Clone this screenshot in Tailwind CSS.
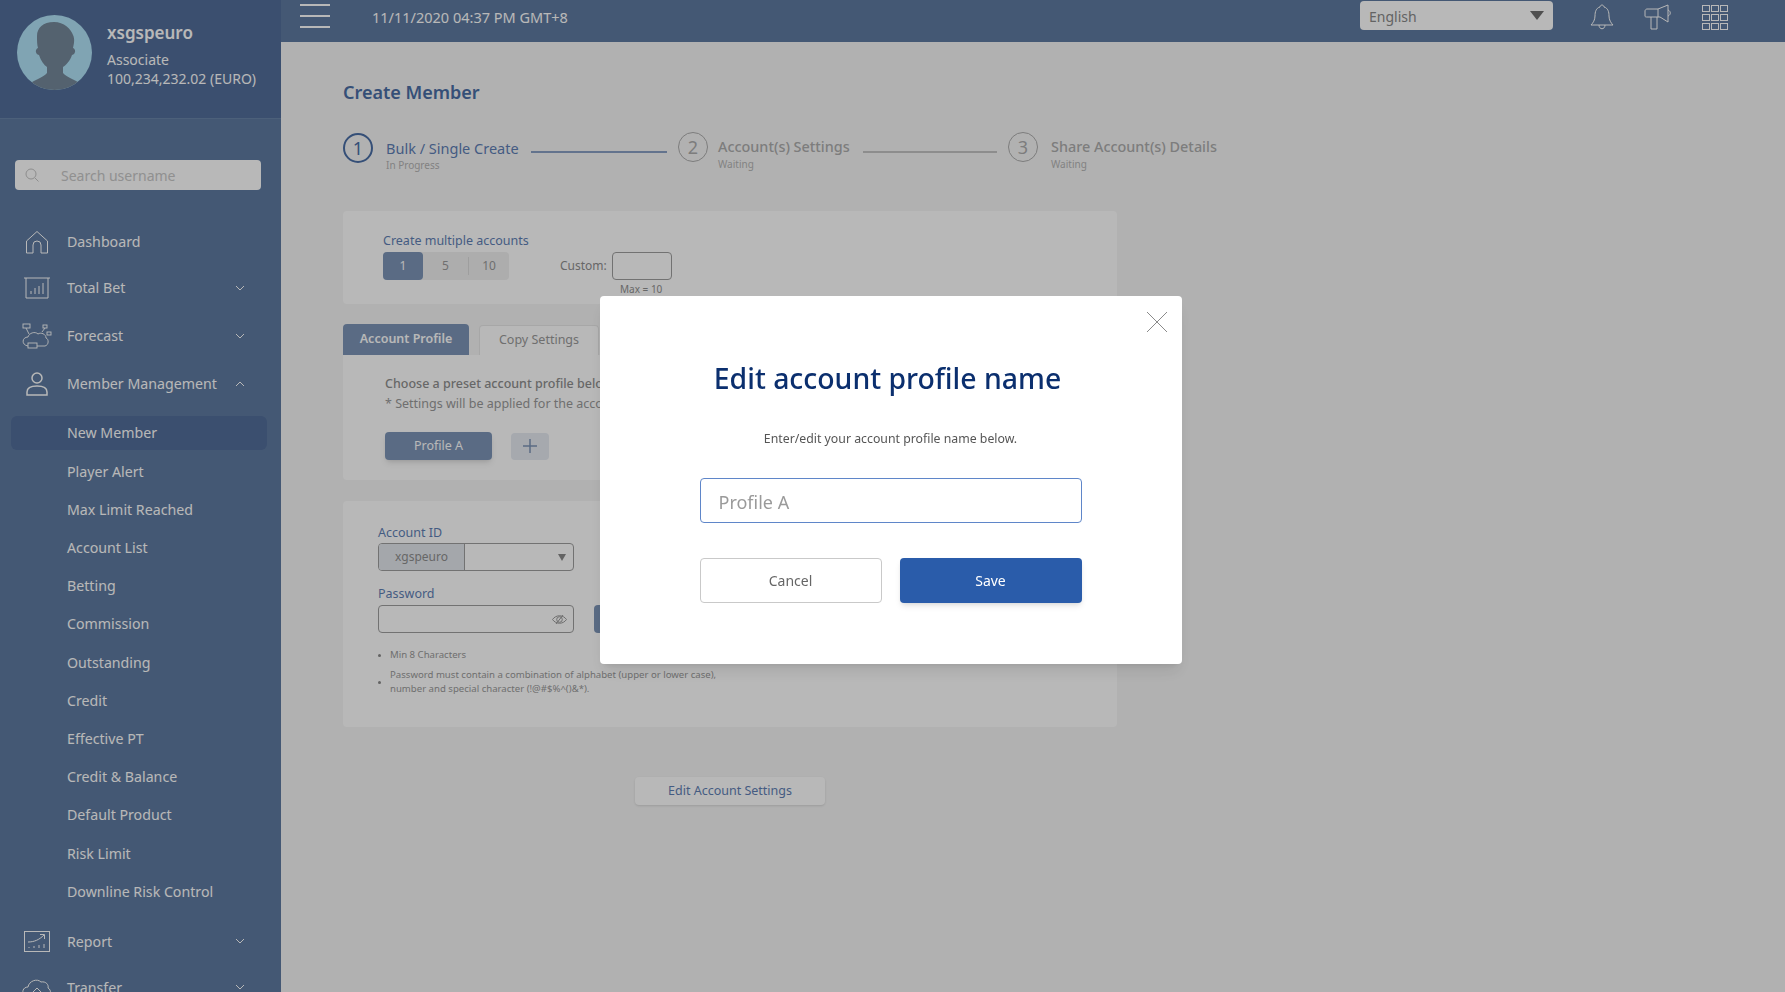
<!DOCTYPE html>
<html lang="en">

<head>
    <meta charset="UTF-8">
    <meta name="viewport" content="width=device-width, initial-scale=1.0">
    <title>Create Member</title>
    <script src="https://cdn.jsdelivr.net/npm/@tailwindcss/browser@4"></script>
</head>

<body class="h-[992px] overflow-hidden bg-[#f6f6f6] font-['Noto_Sans',sans-serif]">
    <div class="flex h-[992px]">
        <!-- sidebar -->
        <aside class="w-[281px] h-[992px] shrink-0 overflow-hidden bg-[#5f7ba1] text-white">
            <div class="h-[119px] flex items-start pl-[17px] pt-[15px] gap-[15px] bg-[#526e9a] border-b border-[#6a85aa]">
                <svg class="w-[75px] h-[75px]" viewBox="0 0 75 75">
                    <clipPath id="avatar"><circle cx="37.5" cy="37.5" r="37.5" /></clipPath>
                    <g clip-path="url(#avatar)">
                        <rect width="75" height="75" fill="#b2e4f8" />
                        <path d="M37 7c-11 0-17 6-17 14 0 5 0 9 1 12-3 1-3 6 1 7 2 6 5 10 8 12v6c-4 5-14 7-22 14v3h60v-3c-8-7-18-9-22-14v-6c3-2 7-6 9-12 4-1 4-6 1-7 1-4 2-9 0-13-2-6-9-13-19-13z" fill="#75889a" />
                    </g>
                </svg>
                <div class="pt-[7px]">
                    <p class="text-[17px] leading-[22px] font-semibold">xsgspeuro</p>
                    <p class="text-[14px] leading-[19px] mt-[6px]">Associate</p>
                    <p class="text-[14px] leading-[19px]">100,234,232.02 (EURO)</p>
                </div>
            </div>

            <div class="mt-[41px] mx-[15px] w-[246px] h-[30px] rounded-[4px] bg-white flex items-center pl-[10px] gap-[22px]">
                <svg class="w-[14px] h-[14px] text-[#c4c4c4]" viewBox="0 0 14 14" fill="none" stroke="currentColor"><circle cx="6" cy="6" r="5" /><path d="M10 10l3.500 3.500" /></svg>
                <span class="text-[14px] text-[#c8c8c8]">Search username</span>
            </div>

            <nav class="mt-[29px] text-[14.2px]">
                <div class="h-[46px] flex items-center">
                    <svg class="w-[24px] h-[24px] ml-[25px] mr-[18px]" viewBox="0 0 24 24" fill="none" stroke="currentColor"><path d="M1.500 11L12 1.500 22.500 11v12H16v-8a4 4 0 0 0-8 0v8H1.500z" /></svg>
                    <span>Dashboard</span>
                </div>
                <div class="h-[46px] flex items-center">
                    <svg class="w-[26px] h-[22px] ml-[24px] mr-[17px]" viewBox="0 0 26 22" fill="none" stroke="currentColor"><path d="M0 1h26M2 1v20h22V1" /><path d="M7 17v-3M11 17v-6M15 17V9M19 17V6" /></svg>
                    <span>Total Bet</span>
                    <svg class="w-[10px] h-[6px] ml-auto mr-[36px]" viewBox="0 0 10 6" fill="none" stroke="currentColor"><path d="M1 1l4 4 4-4" /></svg>
                </div>
                <div class="h-[50px] flex items-center">
                    <svg class="w-[30px] h-[26px] ml-[22px] mr-[15px]" viewBox="0 0 30 26" fill="none" stroke="currentColor" stroke-width=".9"><rect x="1" y="1" width="7" height="4" /><rect x="21" y="2" width="4" height="3" /><rect x="25" y="9" width="4" height="3" /><rect x="6" y="20" width="9" height="5" /><path d="M6 23c-7-1-6-9 0-9 1-4 7-6 10-3 3-2 8 0 8 4 3 1 3 7-1 8h-8M4 5l3 6M23 5l-3 4" /></svg>
                    <span>Forecast</span>
                    <svg class="w-[10px] h-[6px] ml-auto mr-[36px]" viewBox="0 0 10 6" fill="none" stroke="currentColor"><path d="M1 1l4 4 4-4" /></svg>
                </div>
                <div class="h-[46px] flex items-center">
                    <svg class="w-[24px] h-[24px] ml-[25px] mr-[18px]" viewBox="0 0 24 24" fill="none" stroke="currentColor" stroke-width="1.500"><circle cx="12" cy="6" r="5" /><path d="M2 23v-3c0-4 4-6 10-6s10 2 10 6v3z" /></svg>
                    <span>Member Management</span>
                    <svg class="w-[10px] h-[6px] ml-auto mr-[36px]" viewBox="0 0 10 6" fill="none" stroke="currentColor"><path d="M1 5l4-4 4 4" /></svg>
                </div>

                <div class="mt-[7px] h-[38.2px] flex items-center mx-[11px] w-[256px] pl-[56px] relative">
                    <span class="absolute inset-x-0 top-[2px] h-[34px] rounded-[6px] bg-[#526e9a]"></span>
                    <span class="relative">New Member</span>
                </div>
                <div class="h-[38.2px] flex items-center pl-[67px]">Player Alert</div>
                <div class="h-[38.2px] flex items-center pl-[67px]">Max Limit Reached</div>
                <div class="h-[38.2px] flex items-center pl-[67px]">Account List</div>
                <div class="h-[38.2px] flex items-center pl-[67px]">Betting</div>
                <div class="h-[38.2px] flex items-center pl-[67px]">Commission</div>
                <div class="h-[38.2px] flex items-center pl-[67px]">Outstanding</div>
                <div class="h-[38.2px] flex items-center pl-[67px]">Credit</div>
                <div class="h-[38.2px] flex items-center pl-[67px]">Effective PT</div>
                <div class="h-[38.2px] flex items-center pl-[67px]">Credit &amp; Balance</div>
                <div class="h-[38.2px] flex items-center pl-[67px]">Default Product</div>
                <div class="h-[38.2px] flex items-center pl-[67px]">Risk Limit</div>
                <div class="h-[38.2px] flex items-center pl-[67px]">Downline Risk Control</div>

                <div class="mt-[8px] h-[46px] flex items-center">
                    <svg class="w-[26px] h-[21px] ml-[24px] mr-[17px]" viewBox="0 0 26 21" fill="none" stroke="currentColor"><rect x=".5" y=".5" width="25" height="20" /><path d="M4 11c6 0 11-2 16-7M16 3.500h4.500V8M5 17v-1M10 17v-2M15 17v-3M20 17v-4" /></svg>
                    <span>Report</span>
                    <svg class="w-[10px] h-[6px] ml-auto mr-[36px]" viewBox="0 0 10 6" fill="none" stroke="currentColor"><path d="M1 1l4 4 4-4" /></svg>
                </div>
                <div class="h-[46px] flex items-center">
                    <svg class="w-[30px] h-[24px] ml-[22px] mr-[15px]" viewBox="0 0 30 24" fill="none" stroke="currentColor"><path d="M7 22c-8 0-8-10-1-10 1-6 9-9 13-5 5-1 8 3 7 6 4 2 3 9-2 9zM11 17l4-4 4 4" /></svg>
                    <span>Transfer</span>
                    <svg class="w-[10px] h-[6px] ml-auto mr-[36px]" viewBox="0 0 10 6" fill="none" stroke="currentColor"><path d="M1 1l4 4 4-4" /></svg>
                </div>
            </nav>
        </aside>

        <div class="flex-1 min-w-0">
            <!-- top bar -->
            <header class="h-[42px] bg-[#5f7ba1] flex items-center text-white">
                <div class="ml-[19px] mb-[11px] w-[30px] flex flex-col gap-[9px]">
                    <span class="h-[2px] bg-white"></span>
                    <span class="h-[2px] bg-white"></span>
                    <span class="h-[2px] bg-white"></span>
                </div>
                <span class="ml-[42px] text-[14.5px] mb-[7px]">11/11/2020 04:37 PM GMT+8</span>
                <div class="ml-auto w-[193px] h-[29px] mb-[11px] rounded-[4px] bg-white flex items-center justify-between pl-[9px] pr-[9px]">
                    <span class="text-[14px] mt-[2px] text-[#8a8a8a]">English</span>
                    <span class="w-0 h-0 border-x-[7px] border-x-transparent border-t-[9px] border-t-[#6f6f6f]"></span>
                </div>
                <svg class="ml-[37px] mb-[8px] w-[24px] h-[26px]" viewBox="0 0 24 26" fill="none" stroke="currentColor"><path d="M12 1c-1 0-2 1-2 2-4 1-5 5-5 9 0 4-2 7-4 9h22c-2-2-4-5-4-9 0-4-1-8-5-9 0-1-1-2-2-2zM9 21c0 5 6 5 6 0" /></svg>
                <svg class="ml-[30px] mb-[8px] w-[28px] h-[27px]" viewBox="0 0 28 27" fill="none" stroke="currentColor"><path d="M1 7c0-1 1-2 2-2h11l10-4v17l-8-5H7v12h6V13M1 7v5c0 1 1 1 2 1h4M14 5v8M24 6c3 1 3 5 0 6" /></svg>
                <div class="ml-[30px] mr-[57px] mb-[8px] grid grid-cols-3 gap-x-[1px] gap-y-[2px]">
                    <span class="w-[8px] h-[7px] border border-white"></span><span class="w-[8px] h-[7px] border border-white"></span><span class="w-[8px] h-[7px] border border-white"></span>
                    <span class="w-[8px] h-[7px] border border-white"></span><span class="w-[8px] h-[7px] border border-white"></span><span class="w-[8px] h-[7px] border border-white"></span>
                    <span class="w-[8px] h-[7px] border border-white"></span><span class="w-[8px] h-[7px] border border-white"></span><span class="w-[8px] h-[7px] border border-white"></span>
                </div>
            </header>

            <main class="pl-[62px] w-[836px]">
                <h1 class="mt-[37px] text-[18px] leading-[26px] font-semibold text-[#4a6ea6]">Create Member</h1>

                <!-- stepper -->
                <div class="mt-[28px] flex items-start w-[900px]">
                    <span class="w-[30px] h-[30px] rounded-full border-2 border-[#4a6ea6] text-[#4a6ea6] text-[18px] flex items-center justify-center">1</span>
                    <div class="ml-[13px] w-[145px]">
                        <p class="text-[14.5px] leading-[20px] mt-[5px] text-[#5f7fb5]">Bulk / Single Create</p>
                        <p class="text-[10px] leading-[14px] text-[#b4b4b4]">In Progress</p>
                    </div>
                    <span class="w-[136px] h-[2px] mt-[18px] bg-[#8aa0c4]"></span>
                    <span class="ml-[11px] -mt-[1px] w-[30px] h-[30px] rounded-full border border-[#adadad] text-[#adadad] text-[18px] flex items-center justify-center">2</span>
                    <div class="ml-[10px] w-[145px]">
                        <p class="text-[14.4px] leading-[20px] mt-[4px] font-medium text-[#adadad]">Account(s) Settings</p>
                        <p class="text-[10px] leading-[14px] text-[#b4b4b4]">Waiting</p>
                    </div>
                    <span class="w-[134px] h-[2px] mt-[18px] bg-[#c4c4c4]"></span>
                    <span class="ml-[11px] -mt-[1px] w-[30px] h-[30px] rounded-full border border-[#adadad] text-[#adadad] text-[18px] flex items-center justify-center">3</span>
                    <div class="ml-[13px]">
                        <p class="text-[14.4px] leading-[20px] mt-[4px] font-medium text-[#adadad] whitespace-nowrap">Share Account(s) Details</p>
                        <p class="text-[10px] leading-[14px] text-[#b4b4b4]">Waiting</p>
                    </div>
                </div>

                <!-- create multiple accounts -->
                <section class="mt-[39px] w-[774px] h-[93px] rounded-[4px] bg-white pl-[40px] pt-[21px] relative">
                    <p class="text-[12.5px] leading-[18px] text-[#5f7fb5]">Create multiple accounts</p>
                    <div class="mt-[2px] flex items-center">
                        <div class="w-[126px] h-[28px] rounded-[4px] bg-[#f0f0f0] flex items-center text-[12px] text-[#9a9a9a]">
                            <span class="w-[40px] h-[28px] rounded-[4px] bg-[#7d95b7] text-white flex items-center justify-center">1</span>
                            <span class="w-[45px] text-center">5</span>
                            <span class="w-[41px] text-center border-l border-[#dcdcdc]">10</span>
                        </div>
                        <span class="ml-[51px] text-[12px] text-[#8f8f8f]">Custom:</span>
                        <span class="ml-[5px] w-[60px] h-[28px] rounded-[4px] border border-[#9f9f9f] bg-white"></span>
                    </div>
                    <p class="absolute left-[277px] top-[71px] text-[10px] leading-[14px] text-[#8f8f8f]">Max = 10</p>
                </section>

                <!-- tabs -->
                <div class="mt-[20px] flex items-end gap-[10px]">
                    <span class="w-[126px] h-[31px] rounded-t-[4px] bg-[#7d95b7] text-white text-[12.5px] font-semibold flex items-center justify-center">Account Profile</span>
                    <span class="w-[120px] h-[30px] rounded-t-[4px] bg-white border border-b-0 border-[#e8e8e8] text-[#9a9a9a] text-[12.5px] flex items-center justify-center">Copy Settings</span>
                </div>
                <section class="w-[774px] h-[125px] rounded-b-[4px] bg-white pl-[42px] pt-[19px]">
                    <p class="text-[12.5px] leading-[20px] font-medium text-[#8f8f8f]">Choose a preset account profile below</p>
                    <p class="text-[12.5px] leading-[20px] text-[#9a9a9a]">* Settings will be applied for the account</p>
                    <div class="mt-[18px] flex items-center gap-[19px]">
                        <span class="w-[107px] h-[28px] rounded-[4px] bg-[#7d95b7] text-white text-[12.5px] flex items-center justify-center shadow-md">Profile A</span>
                        <span class="w-[38px] h-[27px] rounded-[4px] bg-[#e6ebf2] flex items-center justify-center">
                            <svg class="w-[16px] h-[16px] text-[#7d95b7]" viewBox="0 0 16 16" stroke="currentColor" stroke-width="1.500"><path d="M8 1v14M1 8h14" /></svg>
                        </span>
                    </div>
                </section>

                <!-- account details -->
                <section class="mt-[21px] w-[774px] h-[226px] rounded-[4px] bg-white pl-[35px] pt-[23px]">
                    <p class="text-[12.5px] leading-[18px] text-[#5f7fb5]">Account ID</p>
                    <div class="mt-[1px] w-[196px] h-[28px] rounded-[4px] border border-[#9f9f9f] flex items-stretch overflow-hidden">
                        <span class="w-[86px] bg-[#e4e8ee] border-r border-[#9f9f9f] text-[12px] text-[#8f8f8f] flex items-center justify-center">xgspeuro</span>
                        <span class="flex-1 flex items-center justify-end pr-[7px]"><span class="w-0 h-0 border-x-[4px] border-x-transparent border-t-[7px] border-t-[#8a8a8a]"></span></span>
                    </div>
                    <p class="mt-[14px] text-[12.5px] leading-[18px] text-[#5f7fb5]">Password</p>
                    <div class="mt-[2px] flex items-center gap-[20px]">
                        <div class="w-[196px] h-[28px] rounded-[4px] border border-[#9f9f9f] flex items-center justify-end pr-[6px]">
                            <svg class="w-[15px] h-[11px] text-[#9a9a9a]" viewBox="0 0 15 11" fill="none" stroke="currentColor"><path d="M.5 5.500C4 .5 11 .5 14.500 5.500 11 10.500 4 10.500.5 5.500z" /><circle cx="7.500" cy="5.500" r="2.800" /><path d="M4 10l7-9" /></svg>
                        </div>
                        <span class="w-[100px] h-[28px] rounded-[4px] bg-[#7d95b7]"></span>
                    </div>
                    <ul class="mt-[15px] text-[9.6px] text-[#9a9a9a]">
                        <li class="flex items-center gap-[9px] leading-[14px]"><span class="w-[3px] h-[3px] rounded-full bg-[#8a8a8a]"></span>Min 8 Characters</li>
                        <li class="mt-[6px] flex items-center gap-[9px] leading-[14px]"><span class="w-[3px] h-[3px] rounded-full bg-[#8a8a8a]"></span>
                            <span>Password must contain a combination of alphabet (upper or lower case),<br>number and special character (!@#$%^()&amp;*).</span>
                        </li>
                    </ul>
                </section>

                <div class="mt-[50px] ml-[292px] w-[190px] h-[28px] rounded-[4px] bg-white shadow-sm text-[12.5px] text-[#5f7fb5] flex items-center justify-center">Edit Account Settings</div>
            </main>
        </div>
    </div>

    <!-- edit profile name dialog -->
    <div class="fixed inset-0 bg-black/[0.28] flex justify-center items-start pt-[296px] pr-[4px]">
        <div class="relative w-[582px] h-[368px] rounded-[4px] bg-white shadow-lg">
            <svg class="absolute right-[15px] top-[16px] w-[20px] h-[20px] text-[#8a8a8a]" viewBox="0 0 20 20" stroke="currentColor"><path d="M0 0l20 20M20 0L0 20" /></svg>
            <h2 class="pt-[62px] pr-[6px] text-center text-[28.4px] leading-[40px] font-medium text-[#0b2f6e]">Edit account profile name</h2>
            <p class="mt-[32px] text-center text-[12.3px] leading-[18px] text-[#555]">Enter/edit your account profile name below.</p>
            <div class="mx-[100px] mt-[30px] h-[45px] rounded-[4px] border border-[#5f86c9] flex items-center pl-[18px] pt-[4px] text-[18px] text-[#9a9a9a]">Profile A</div>
            <div class="mx-[100px] mt-[35px] flex gap-[18px]">
                <button class="w-[182px] h-[45px] rounded-[4px] border border-[#c9c9c9] text-[14px] text-[#666]">Cancel</button>
                <button class="w-[182px] h-[45px] rounded-[4px] bg-[#2a5caa] text-[14px] text-white shadow-md">Save</button>
            </div>
        </div>
    </div>
</body>

</html>
